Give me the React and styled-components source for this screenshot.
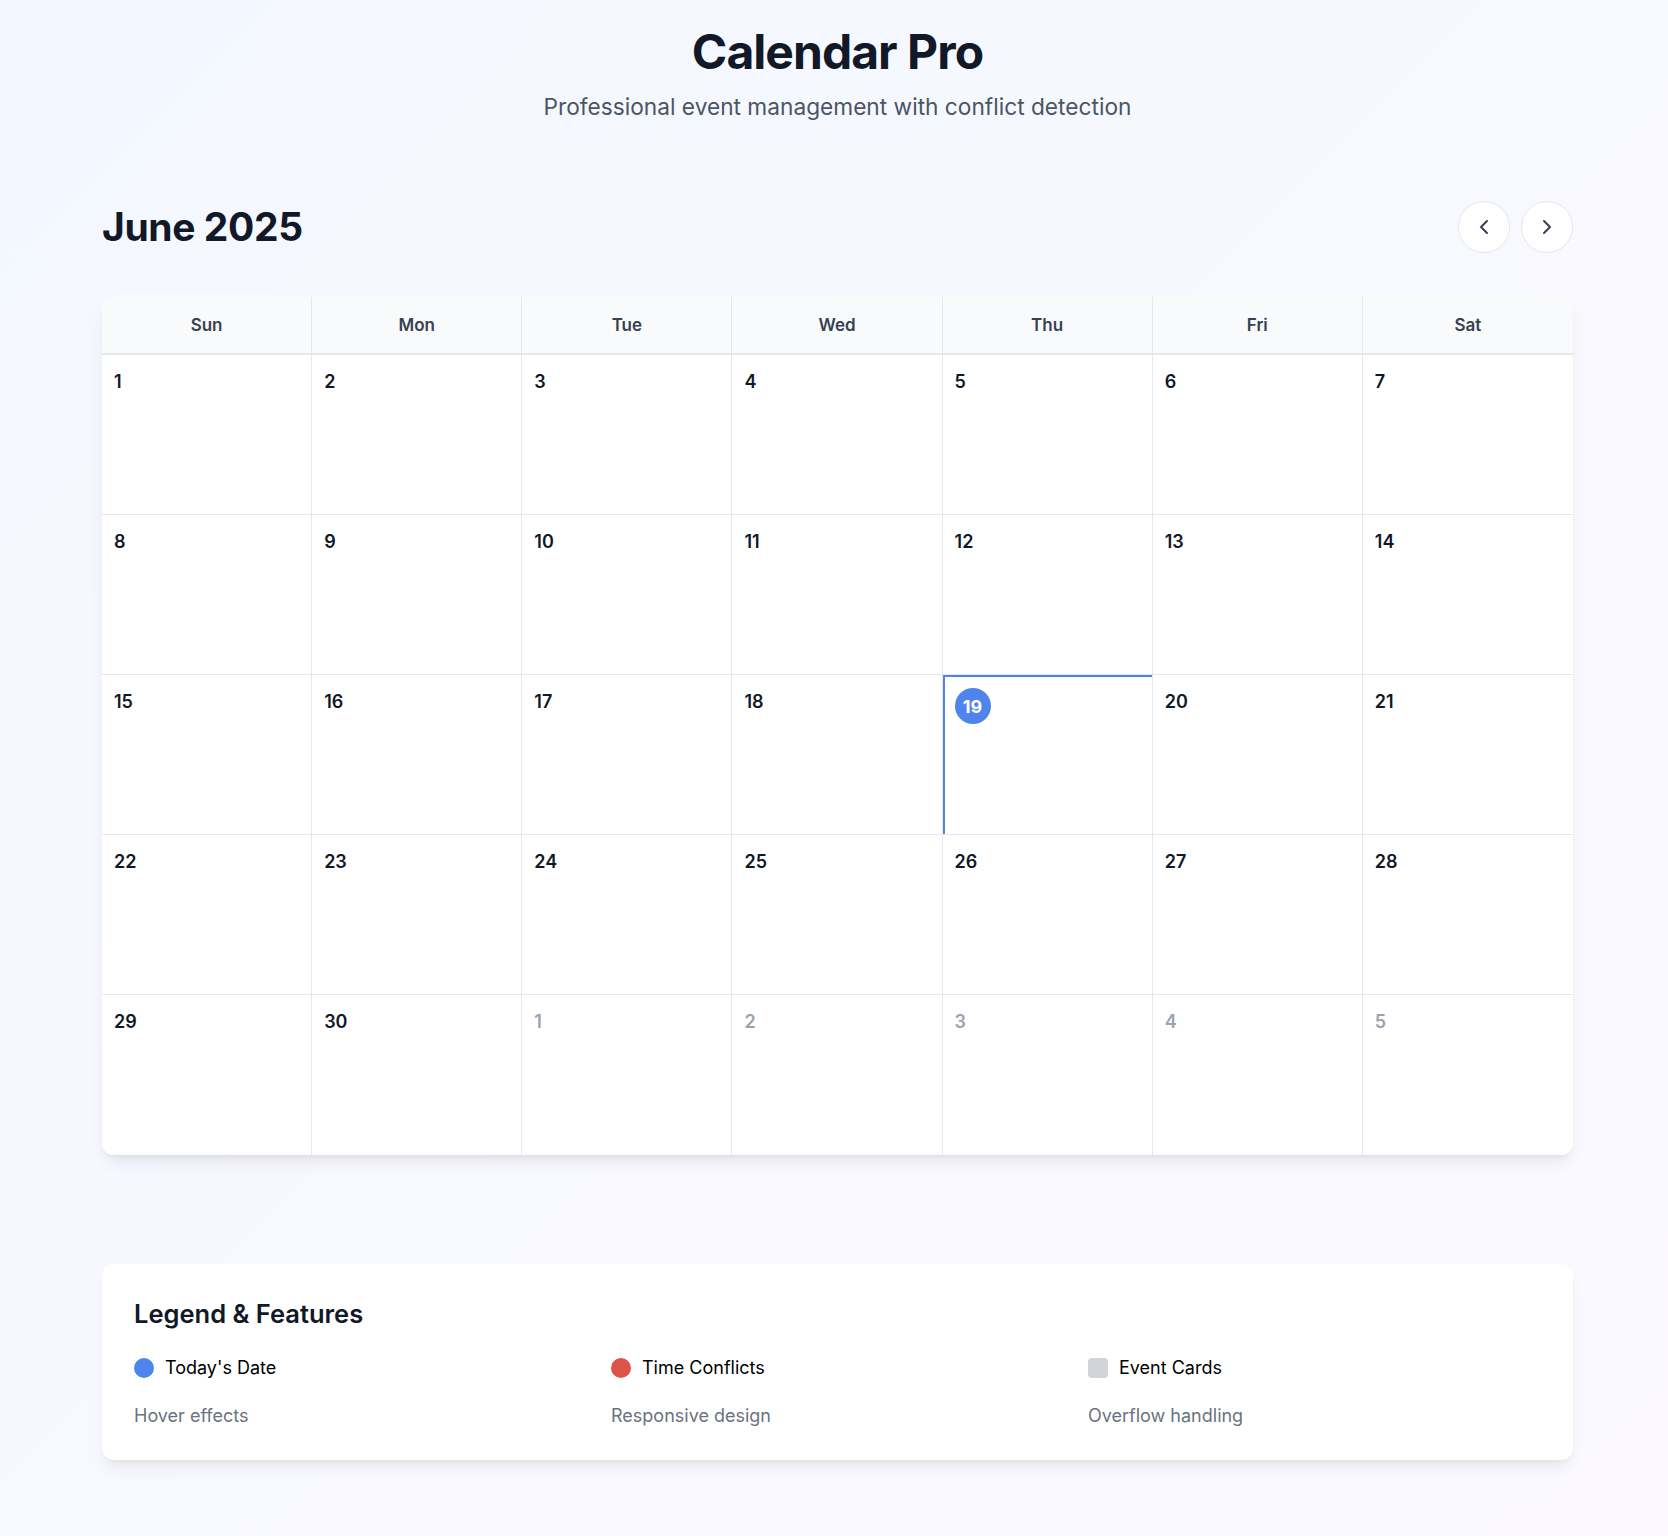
import { ChevronLeft, ChevronRight } from "lucide-react";
import styled, { createGlobalStyle } from "styled-components";

const GlobalStyle = createGlobalStyle`
  * {
    box-sizing: border-box;
  }
  body {
    margin: 0;
    font-family: Inter, "Noto Sans", "Liberation Sans", sans-serif;
    color: #111827;
  }
`;

const weekDays = ["Sun", "Mon", "Tue", "Wed", "Thu", "Fri", "Sat"];

// June 2025 starts on a Sunday, trailing days from July fill the last row
const days = [
  ...Array.from({ length: 30 }, (_, i) => ({ day: i + 1, current: true })),
  ...Array.from({ length: 5 }, (_, i) => ({ day: i + 1, current: false })),
];

const legend = [
  { label: "Today's Date", marker: "today" },
  { label: "Time Conflicts", marker: "conflict" },
  { label: "Event Cards", marker: "event" },
];

const features = ["Hover effects", "Responsive design", "Overflow handling"];

export default function App() {
  const today = 19;

  return (
    <>
      <GlobalStyle />
      <Page>
        <Container>
          <Intro>
            <Title>Calendar Pro</Title>
            <Subtitle>Professional event management with conflict detection</Subtitle>
          </Intro>

          <MonthBar>
            <MonthTitle>June 2025</MonthTitle>
            <NavGroup>
              <NavButton aria-label="Previous month">
                <ChevronLeft size={24} strokeWidth={2} />
              </NavButton>
              <NavButton aria-label="Next month">
                <ChevronRight size={24} strokeWidth={2} />
              </NavButton>
            </NavGroup>
          </MonthBar>

          <CalendarCard>
            <WeekHeader>
              {weekDays.map((name) => (
                <WeekDay key={name}>{name}</WeekDay>
              ))}
            </WeekHeader>
            <DaysGrid>
              {days.map((item, index) => {
                const isToday = item.current && item.day === today;
                return (
                  <DayCell
                    key={index}
                    $today={isToday}
                    $lastCol={index % 7 === 6}
                    $lastRow={index >= 28}
                  >
                    {isToday ? (
                      <TodayBadge>{item.day}</TodayBadge>
                    ) : (
                      <DayNumber $muted={!item.current}>{item.day}</DayNumber>
                    )}
                  </DayCell>
                );
              })}
            </DaysGrid>
          </CalendarCard>

          <LegendCard>
            <LegendTitle>Legend &amp; Features</LegendTitle>
            <LegendGrid>
              {legend.map((item) => (
                <LegendItem key={item.label}>
                  <Marker $kind={item.marker} />
                  <span>{item.label}</span>
                </LegendItem>
              ))}
              {features.map((text) => (
                <FeatureText key={text}>{text}</FeatureText>
              ))}
            </LegendGrid>
          </LegendCard>
        </Container>
      </Page>
    </>
  );
}

const Page = styled.div`
  min-height: 100vh;
  background: linear-gradient(135deg, #f3f7ff 0%, #f8f9ff 50%, #fbf9ff 100%);
  padding: 24px 95px 76px 102px;
`;

const Container = styled.div`
  width: 100%;
  max-width: 1471px;
`;

const Intro = styled.header`
  text-align: center;
`;

const Title = styled.h1`
  margin: 0;
  font-size: 48px;
  line-height: 56px;
  font-weight: 700;
  letter-spacing: -0.02em;
  color: #111827;
`;

const Subtitle = styled.p`
  margin: 13px 0 0;
  font-size: 22.7px;
  line-height: 28px;
  color: #4b5563;
`;

const MonthBar = styled.div`
  display: flex;
  align-items: center;
  justify-content: space-between;
  height: 52px;
  margin-top: 80px;
`;

const MonthTitle = styled.h2`
  margin: 0;
  font-size: 39px;
  line-height: 48px;
  font-weight: 700;
  letter-spacing: -0.01em;
  color: #111827;
`;

const NavGroup = styled.div`
  display: flex;
  gap: 11px;
`;

const NavButton = styled.button`
  display: flex;
  align-items: center;
  justify-content: center;
  width: 52px;
  height: 52px;
  padding: 0;
  border-radius: 50%;
  border: 1px solid #e5e7eb;
  background-color: #ffffff;
  color: #374151;
  cursor: pointer;
  &:hover {
    background-color: #f9fafb;
  }
`;

const CalendarCard = styled.section`
  margin-top: 44px;
  background-color: #ffffff;
  border-radius: 12px;
  overflow: hidden;
  box-shadow: 0 10px 15px -3px rgba(0, 0, 0, 0.08),
    0 4px 6px -4px rgba(0, 0, 0, 0.08);
`;

const WeekHeader = styled.div`
  display: grid;
  grid-template-columns: repeat(7, 1fr);
  background-color: #f9fafb;
  border-bottom: 2px solid #e5e7eb;
`;

const WeekDay = styled.div`
  display: flex;
  align-items: center;
  justify-content: center;
  height: 56px;
  font-size: 17px;
  font-weight: 600;
  color: #374151;
  border-right: 1px solid #e5e7eb;
  &:last-child {
    border-right: none;
  }
`;

const DaysGrid = styled.div`
  display: grid;
  grid-template-columns: repeat(7, 1fr);
`;

const DayCell = styled.div`
  height: 160px;
  padding: 13px 12px;
  background-color: #ffffff;
  border-right: ${(p) => (p.$lastCol ? "none" : "1px solid #e5e7eb")};
  border-bottom: ${(p) => (p.$lastRow ? "none" : "1px solid #e5e7eb")};
  box-shadow: ${(p) => (p.$today ? "inset 2px 2px 0 0 #4f83ee" : "none")};
`;

const DayNumber = styled.span`
  display: inline-block;
  margin-top: 1px;
  font-size: 18px;
  line-height: 26px;
  font-weight: 600;
  color: ${(p) => (p.$muted ? "#9ca3af" : "#111827")};
`;

const TodayBadge = styled.span`
  display: inline-flex;
  align-items: center;
  justify-content: center;
  width: 36px;
  height: 36px;
  border-radius: 50%;
  background-color: #4f83ee;
  color: #ffffff;
  font-size: 18px;
  font-weight: 700;
`;

const LegendCard = styled.section`
  margin-top: 109px;
  padding: 32px;
  background-color: #ffffff;
  border-radius: 12px;
  box-shadow: 0 10px 15px -3px rgba(0, 0, 0, 0.07),
    0 4px 6px -4px rgba(0, 0, 0, 0.07);
`;

const LegendTitle = styled.h3`
  margin: 0 0 24px;
  font-size: 25.5px;
  line-height: 36px;
  font-weight: 600;
  color: #111827;
`;

const LegendGrid = styled.div`
  display: grid;
  grid-template-columns: repeat(3, 1fr);
  column-gap: 24px;
  row-gap: 24px;
`;

const LegendItem = styled.div`
  display: flex;
  align-items: center;
  gap: 11px;
  font-size: 18px;
  line-height: 24px;
  color: #000000;
`;

const markerColors = {
  today: "#4f83ee",
  conflict: "#dd5249",
  event: "#d1d5db",
};

const Marker = styled.span`
  width: 20px;
  height: 20px;
  flex-shrink: 0;
  border-radius: ${(p) => (p.$kind === "event" ? "4px" : "50%")};
  background-color: ${(p) => markerColors[p.$kind]};
`;

const FeatureText = styled.div`
  font-size: 18px;
  line-height: 24px;
  color: #6b7280;
`;
